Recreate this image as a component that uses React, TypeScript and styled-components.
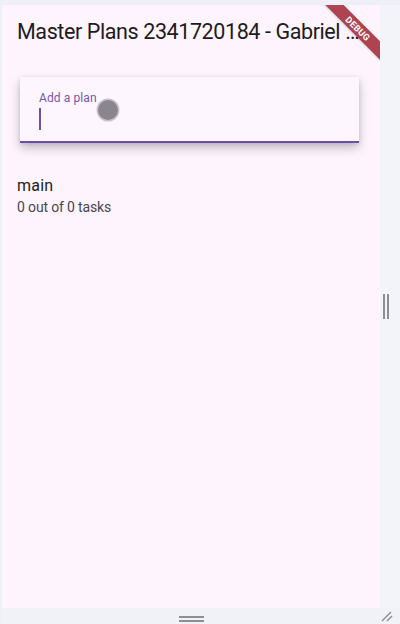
import React from "react";
import styled, { createGlobalStyle } from "styled-components";

const Global = createGlobalStyle`
  html, body { margin: 0; padding: 0; }
  body { font-family: Roboto, "Liberation Sans", sans-serif; background: #eff0f7; }
`;

const Frame = styled.div`
  width: 400px;
  height: 624px;
  box-sizing: border-box;
  padding: 5px 0 0 2px;
  background: #eff0f7;
  display: grid;
  grid-template-columns: 378px 1fr;
  grid-template-rows: 603px 1fr;
  overflow: hidden;
`;

const AppArea = styled.div`
  position: relative;
  background: #fdf4fd;
  overflow: hidden;
  display: flex;
  flex-direction: column;
`;

const AppBar = styled.header`
  height: 56px;
  display: flex;
  align-items: center;
  padding: 0 15px;
  flex-shrink: 0;
`;

const Title = styled.h1`
  margin: 0;
  font-family: Roboto, sans-serif;
  font-weight: 400;
  font-size: 21.5px;
  letter-spacing: -0.4px;
  color: #1d1b20;
  white-space: nowrap;
  transform: translateY(-2px);
`;

const Body = styled.main`
  display: flex;
  flex-direction: column;
  padding-top: 16px;
`;

const InputCard = styled.div`
  position: relative;
  margin-left: 18px;
  width: 339px;
  height: 66px;
  box-sizing: border-box;
  background: #fdf6fe;
  border-bottom: 2px solid #6a50a7;
  box-shadow: 0 5px 10px rgba(0, 0, 0, 0.22), 0 1px 4px rgba(0, 0, 0, 0.1);
  padding: 14px 0 0 19px;
  display: flex;
  flex-direction: column;
  gap: 3px;
`;

const Label = styled.span`
  font-size: 12px;
  color: #7458ae;
  letter-spacing: 0.1px;
`;

const Cursor = styled.span`
  width: 2px;
  height: 22px;
  background: #6a50a7;
`;

const Touch = styled.span`
  position: absolute;
  left: 78px;
  top: 23px;
  width: 20px;
  height: 20px;
  border-radius: 50%;
  background: #8a868d;
  box-shadow: 0 0 0 1.5px rgba(138, 134, 141, 0.45);
`;

const PlanItem = styled.div`
  display: flex;
  flex-direction: column;
  padding: 33px 15px 0;
  gap: 4px;
`;

const PlanName = styled.span`
  font-size: 16px;
  color: #1d1b20;
  letter-spacing: 0.2px;
`;

const PlanSub = styled.span`
  font-size: 14px;
  color: #49454f;
  letter-spacing: -0.15px;
`;

const Banner = styled.div`
  position: absolute;
  top: 17px;
  right: -38px;
  width: 120px;
  height: 13px;
  transform: rotate(45deg);
  background: rgba(160, 36, 50, 0.85);
  color: #fff;
  font-size: 9px;
  font-weight: 700;
  letter-spacing: 0.3px;
  display: flex;
  align-items: center;
  justify-content: center;
  box-shadow: 0 1px 2px rgba(0, 0, 0, 0.15);
`;

const SideRail = styled.div`
  display: flex;
  align-items: center;
  justify-content: flex-start;
  padding-left: 3px;
  background: #f3f4fa;
`;

const VHandle = styled.div`
  width: 6px;
  height: 25px;
  border-left: 2px solid #8e8e92;
  border-right: 2px solid #8e8e92;
  box-sizing: border-box;
`;

const BottomBar = styled.div`
  display: flex;
  justify-content: center;
  align-items: flex-end;
  padding-bottom: 2px;
  background: #f1f2f8;
`;

const HHandle = styled.div`
  width: 25px;
  height: 6px;
  border-top: 2px solid #8e8e92;
  border-bottom: 2px solid #8e8e92;
  box-sizing: border-box;
`;

const Corner = styled.div`
  display: flex;
  align-items: flex-end;
  padding: 0 0 2px 1px;
  background: #f1f2f8;
`;

export default function App() {
  return (
    <>
      <Global />
      <Frame>
        <AppArea>
          <AppBar>
            <Title>Master Plans 2341720184 - Gabriel …</Title>
          </AppBar>
          <Body>
            <InputCard>
              <Label>Add a plan</Label>
              <Cursor />
              <Touch />
            </InputCard>
            <PlanItem>
              <PlanName>main</PlanName>
              <PlanSub>0 out of 0 tasks</PlanSub>
            </PlanItem>
          </Body>
          <Banner>DEBUG</Banner>
        </AppArea>
        <SideRail>
          <VHandle />
        </SideRail>
        <BottomBar>
          <HHandle />
        </BottomBar>
        <Corner>
          <svg width="12" height="11" viewBox="0 0 12 11">
            <line x1="1" y1="10" x2="10" y2="1" stroke="#8e8e92" strokeWidth="1.5" />
            <line x1="6" y1="10" x2="11" y2="5" stroke="#8e8e92" strokeWidth="1.5" />
          </svg>
        </Corner>
      </Frame>
    </>
  );
}
